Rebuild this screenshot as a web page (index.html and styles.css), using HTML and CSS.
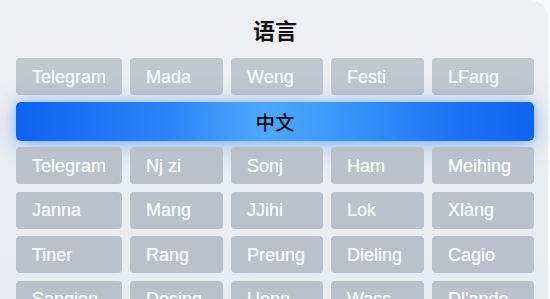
FILE: index.html
```html
<!DOCTYPE html>
<html lang="zh">
<head>
<meta charset="utf-8">
<title>语言</title>
<link rel="stylesheet" href="styles.css">
</head>
<body>
<div class="panel">
  <h1 class="title">语言</h1>
  <div class="grid">
    <div class="btn">Telegram</div>
    <div class="btn">Mada</div>
    <div class="btn">Weng</div>
    <div class="btn">Festi</div>
    <div class="btn">LFang</div>
    <div class="btn active">中文</div>
    <div class="btn low">Telegram</div>
    <div class="btn low">Nj zi</div>
    <div class="btn low">Sonj</div>
    <div class="btn low">Ham</div>
    <div class="btn low">Meihing</div>
    <div class="btn low">Janna</div>
    <div class="btn low">Mang</div>
    <div class="btn low">JJihi</div>
    <div class="btn low">Lok</div>
    <div class="btn low">Xlàng</div>
    <div class="btn low">Tiner</div>
    <div class="btn low">Rang</div>
    <div class="btn low">Preung</div>
    <div class="btn low">Dieling</div>
    <div class="btn low">Cagio</div>
    <div class="btn low">Sangion</div>
    <div class="btn low">Desing</div>
    <div class="btn low">Uonn</div>
    <div class="btn low">Wass</div>
    <div class="btn low">Dl'ando</div>
  </div>
</div>
</body>
</html>
```
FILE: styles.css
```css
html, body {
  margin: 0;
  padding: 0;
}
body {
  width: 550px;
  height: 299px;
  overflow: hidden;
  background: #f8f9fb;
  font-family: "Liberation Sans", "Noto Sans CJK SC", sans-serif;
}
.panel {
  width: 548px;
  height: 320px;
  background: linear-gradient(180deg, #eff0f3 0%, #eceef2 40%, #e8ebf0 100%);
  border-top-right-radius: 18px;
  box-sizing: border-box;
  padding: 17px 14px 0 16px;
}
.title {
  margin: 0 0 17px 0;
  height: 24px;
  line-height: 24px;
  font-size: 22px;
  font-weight: 700;
  text-align: center;
  color: #111;
  font-family: "Noto Sans CJK SC", sans-serif;
}
.grid {
  display: grid;
  grid-template-columns: 106px 93px 92px 93px 102px;
  grid-auto-rows: 37px;
  column-gap: 8px;
  row-gap: 7.5px;
}
.btn {
  background: #c2c6cd;
  border-radius: 4px;
  color: #f8f9fa;
  font-size: 18px;
  display: flex;
  align-items: center;
  padding-left: 16px;
  padding-top: 1px;
  box-sizing: border-box;
  text-shadow: 0 0 0.4px #f8f9fa;
}
.btn.low {
  background: #bbc1cb;
}
.btn.active {
  grid-column: 1 / -1;
  height: 39px;
  margin-top: -0.5px;
  justify-content: center;
  padding-left: 0;
  padding-top: 0;
  color: #0a0a0a;
  text-shadow: none;
  font-family: "Noto Sans CJK SC", sans-serif;
  font-size: 19.5px;
  font-weight: 500;
  border-radius: 5px;
  background: linear-gradient(90deg, #0d62ef 0%, #2c86f8 30%, #4da9fd 48%, #3a98fb 62%, #1b72f3 85%, #0f65ef 100%);
  box-shadow: 0 4px 26px rgba(40, 120, 245, 0.42), 0 0 8px rgba(60, 140, 250, 0.35);
}
```
